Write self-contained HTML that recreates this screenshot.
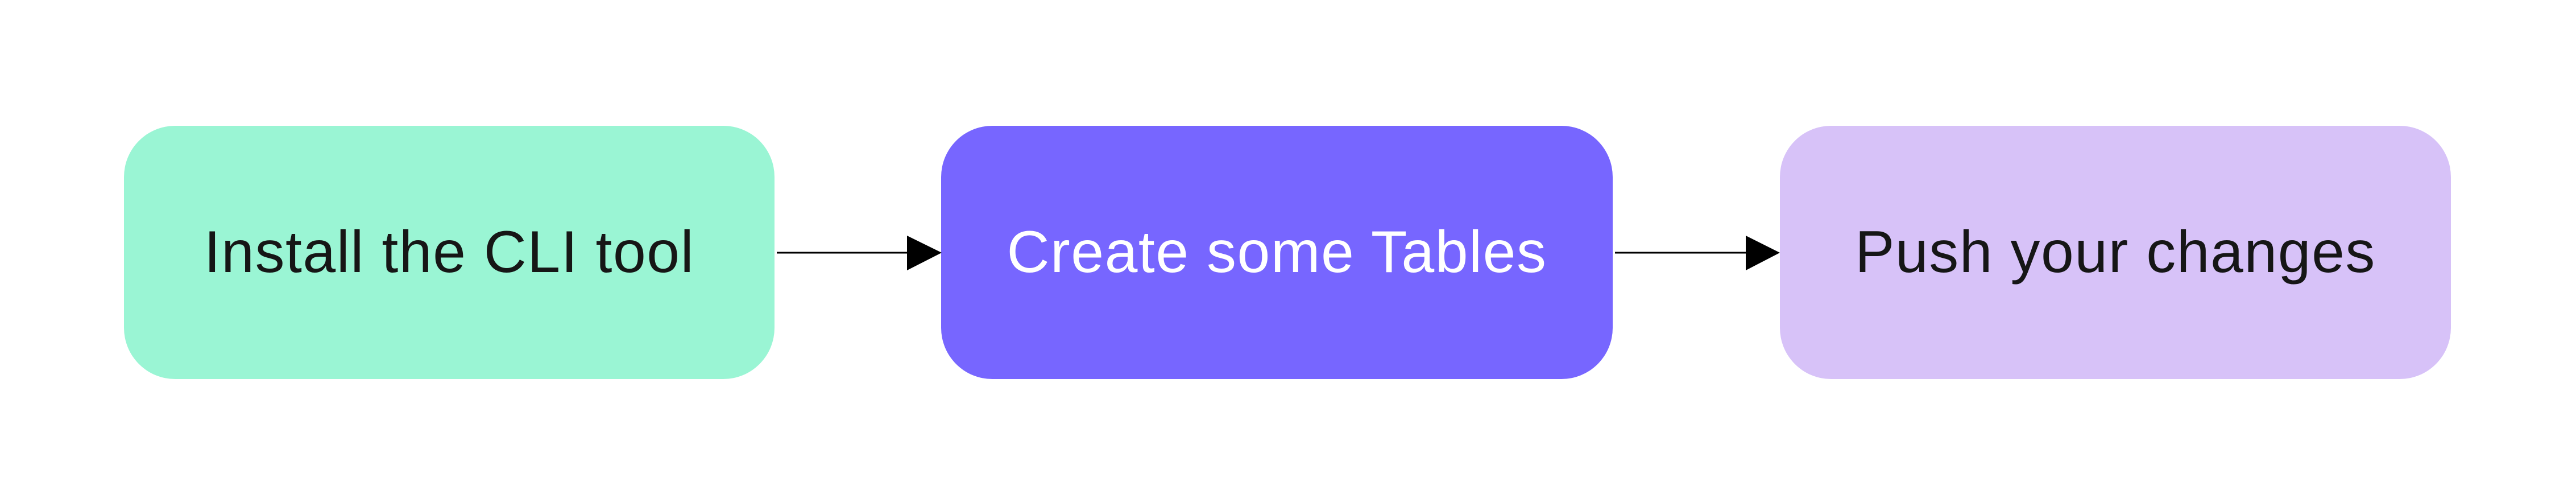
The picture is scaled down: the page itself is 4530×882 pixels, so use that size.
<!DOCTYPE html>
<html><head><meta charset="utf-8"><style>
html,body{margin:0;padding:0;background:#fff;width:4530px;height:882px;overflow:hidden;position:relative}
.b{position:absolute;top:221px;height:445px;border-radius:90px;display:flex;align-items:center;justify-content:center;font-family:"Liberation Sans",sans-serif;font-size:104px;letter-spacing:1.5px}
</style></head><body>
<div class="b" style="left:218px;width:1144px;background:#9af5d4;color:#161616">Install the CLI tool</div>
<div class="b" style="left:1655px;width:1181px;background:#7766ff;color:#fff">Create some Tables</div>
<div class="b" style="left:3130px;width:1180px;background:#d7c2f8;color:#161616">Push your changes</div>
<svg width="4530" height="882" style="position:absolute;left:0;top:0">
<line x1="1366" y1="444" x2="1600" y2="444" stroke="#000" stroke-width="3"/>
<polygon points="1595,414 1656,444 1595,475" fill="#000"/>
<line x1="2840" y1="444" x2="3075" y2="444" stroke="#000" stroke-width="3"/>
<polygon points="3070,414 3130,444 3070,475" fill="#000"/>
</svg>
</body></html>
